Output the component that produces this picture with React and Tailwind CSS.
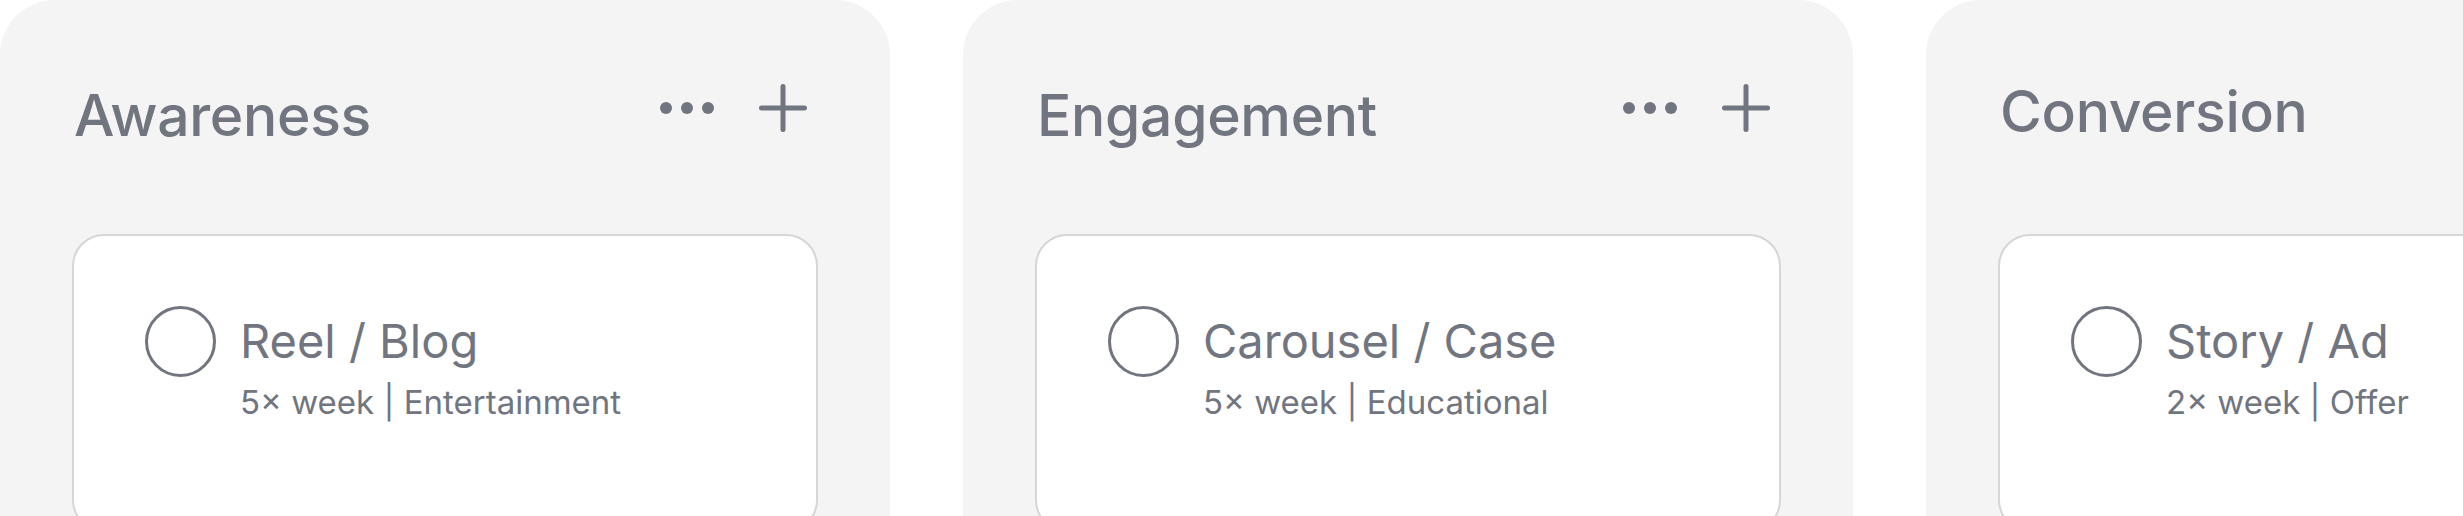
import React from 'react';

const stages = [
  { id: 'awareness', title: 'Awareness', item: 'Reel / Blog', meta: '5× week | Entertainment', titlePad: 'pt-[87px]' },
  { id: 'engagement', title: 'Engagement', item: 'Carousel / Case', meta: '5× week | Educational', titlePad: 'pt-[87px]' },
  { id: 'conversion', title: 'Conversion', item: 'Story / Ad', meta: '2× week | Offer', titlePad: 'pt-[83px]' },
];

// three-dot menu glyph
const Dots = () => (
  <svg width="54" height="12" viewBox="0 0 54 12" className="text-[#71757f]">
    <circle cx="6" cy="6" r="6" fill="currentColor" />
    <circle cx="27" cy="6" r="6" fill="currentColor" />
    <circle cx="48" cy="6" r="6" fill="currentColor" />
  </svg>
);

const PlusIcon = () => (
  <svg width="48" height="48" viewBox="0 0 48 48" className="text-[#71757f]">
    <path d="M24 2.5v43M2.5 24h43" stroke="currentColor" strokeWidth="5" strokeLinecap="round" fill="none" />
  </svg>
);

const StageColumn = ({ stage }) => {
  return (
    <div className="w-[890px] h-[600px] shrink-0 rounded-t-[55px] bg-[#f4f4f4] px-[72px]">
      {/* Header */}
      <div className="h-[234px] flex items-start justify-between">
        <h2 className={`${stage.titlePad} pl-[2px] text-[57px] font-medium tracking-[-0.3px] leading-none text-[#71757f]`}>
          {stage.title}
        </h2>
        <div className="pt-[84px] pr-[11px] flex items-center gap-[45px]">
          <Dots />
          <PlusIcon />
        </div>
      </div>

      {/* Content card */}
      <div className="h-[298px] rounded-[32px] border-2 border-[#d6d6da] bg-white pt-[70px] pl-[71px]">
        <div className="flex items-start gap-[24px]">
          <div className="w-[71px] h-[71px] shrink-0 rounded-full border-[3px] border-[#71757f]" />
          <div className="mt-[11px]">
            <div className="text-[47px] leading-none text-[#71757f]">{stage.item}</div>
            <div className="mt-[22px] text-[33px] leading-none text-[#71757f]">{stage.meta}</div>
          </div>
        </div>
      </div>
    </div>
  );
};

export default function App() {
  return (
    <div
      className="w-full h-[516px] overflow-hidden bg-white flex gap-[73px]"
      style={{ fontFamily: 'Inter, "Noto Sans", sans-serif' }}
    >
      {stages.map(stage => (
        <StageColumn key={stage.id} stage={stage} />
      ))}
    </div>
  );
}
